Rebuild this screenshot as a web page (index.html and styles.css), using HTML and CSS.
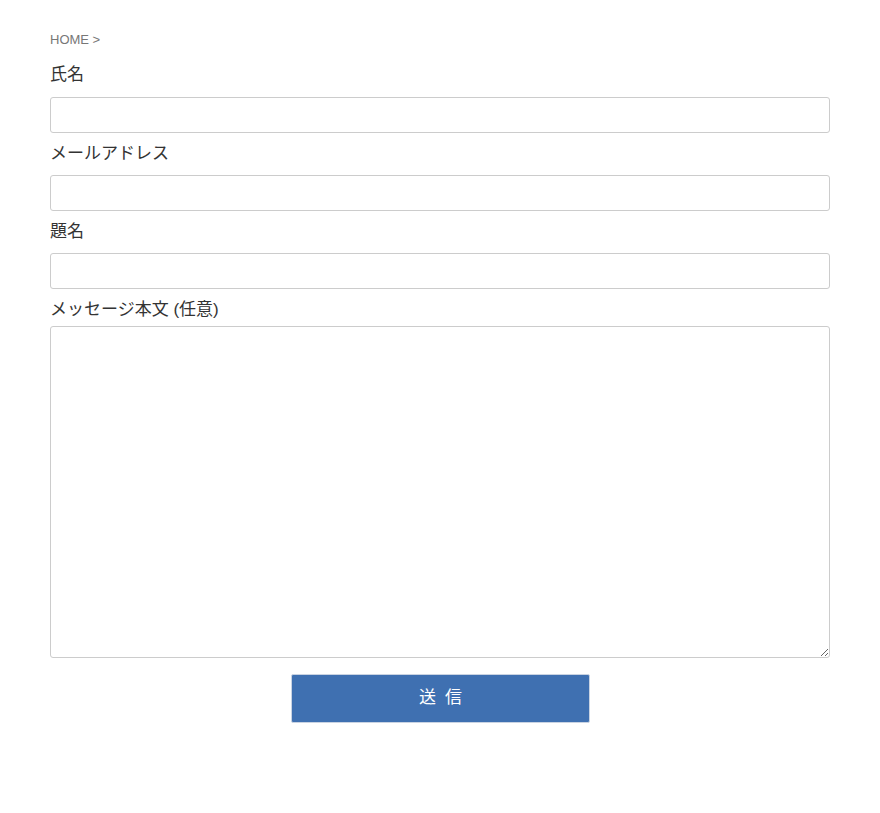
FILE: index.html
```html
<!DOCTYPE html>
<html lang="ja">
<head>
  <meta charset="UTF-8">
  <meta name="viewport" content="width=device-width, initial-scale=1.0">
  <title>お問い合わせ</title>
  <link rel="stylesheet" href="styles.css">
</head>
<body>
  <div class="page">
    <div class="breadcrumb">HOME &gt;</div>
    <form class="contact-form">
      <label class="field-label first" for="name">氏名</label>
      <input class="field-input" type="text" id="name">

      <label class="field-label" for="email">メールアドレス</label>
      <input class="field-input" type="email" id="email">

      <label class="field-label" for="subject">題名</label>
      <input class="field-input" type="text" id="subject">

      <label class="field-label message" for="message">メッセージ本文 (任意)</label>
      <textarea class="field-textarea" id="message"></textarea>

      <div class="submit-row">
        <button type="submit" class="submit-btn">送信</button>
      </div>
    </form>
  </div>
</body>
</html>
```

FILE: styles.css
```css
body {
  margin: 0;
  background: #fff;
  font-family: "Liberation Sans", "Noto Sans CJK JP", sans-serif;
  color: #333;
}

.page {
  width: 780px;
  padding: 30px 50px 0;
}

.breadcrumb {
  font-size: 13px;
  line-height: 20px;
  color: #777;
}

.contact-form {
  display: flex;
  flex-direction: column;
}

.field-label {
  font-size: 17px;
  line-height: 30px;
  margin-top: 6px;
  margin-bottom: 6px;
}

.field-label.first {
  margin-top: 10px;
  margin-bottom: 7px;
}

.field-label.message {
  margin-bottom: 1px;
}

.field-input,
.field-textarea {
  box-sizing: border-box;
  width: 100%;
  margin: 0;
  border: 1px solid #ccc;
  border-radius: 3px;
  background: #fff;
  font: inherit;
}

.field-input {
  height: 36px;
}

.field-textarea {
  height: 332px;
  resize: vertical;
}

.submit-row {
  display: flex;
  margin-top: 16px;
  padding-left: 241px;
}

.submit-btn {
  width: 299px;
  height: 49px;
  border: 1px solid #c9d3e2;
  border-radius: 2px;
  background: #3f70b1;
  color: #fff;
  font-family: "Noto Sans CJK JP", sans-serif;
  font-size: 17px;
  letter-spacing: 9px;
  padding: 0 0 6px 9px;
}
```
